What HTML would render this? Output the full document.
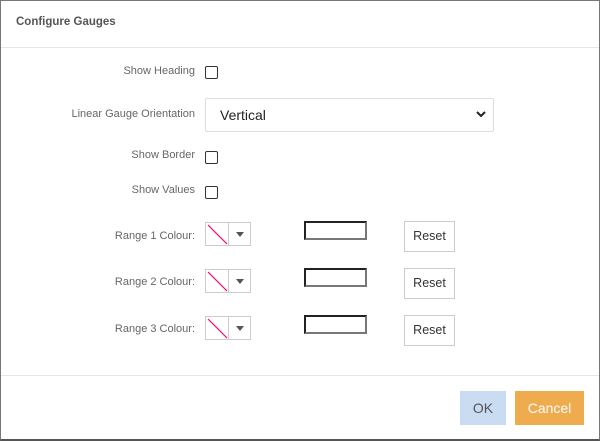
<!DOCTYPE html>
<html><head><style>
*{box-sizing:border-box;margin:0;padding:0}
body{width:600px;height:441px;background:#fff;font-family:"Liberation Sans",sans-serif;position:relative;overflow:hidden}
.frame{position:absolute;left:0;top:0;width:600px;height:441px;border:1px solid #777;border-bottom:2px solid #555}
.abs{position:absolute}
.title{left:16px;top:16px;font-size:11.5px;font-weight:bold;color:#555}
.hr{left:1px;width:598px;height:1px;background:#e6e6e6}
.lbl{right:405px;font-size:11px;color:#666;text-align:right;white-space:nowrap}
.cb{width:13px;height:13px;border:1px solid #333;border-radius:2px;left:205px}
.sel{left:205px;top:98px;width:289px;height:34px;border:1px solid #ddd;border-radius:2px;font-size:14px;color:#222;padding:8px 0 0 14px}
.cp{left:205px;width:46px;height:24px;border:1px solid #ccc;background:#fff}
.cp .sw{position:absolute;left:0;top:0;width:23px;height:22px;border-right:1px solid #ccc}
.box{left:304px;width:63px;height:19px;border:2px solid;border-color:#222 #777 #777 #222}
.rs{left:404px;width:51px;height:31px;border:1px solid #ccc;font-size:12.5px;color:#333;text-align:center;line-height:29px}
</style></head><body>
<div class="frame"></div>
<div class="abs title">Configure Gauges</div>
<div class="abs hr" style="top:47px"></div>
<div class="abs lbl" style="top:65px">Show Heading</div>
<div class="abs cb" style="top:66px"></div>
<div class="abs lbl" style="top:108px">Linear Gauge Orientation</div>
<div class="abs sel">Vertical<svg style="position:absolute;right:7px;top:12px" width="10" height="7" viewBox="0 0 10 7"><path d="M1 1l4 4 4-4" stroke="#222" stroke-width="2" fill="none"/></svg></div>
<div class="abs lbl" style="top:149px">Show Border</div>
<div class="abs cb" style="top:151px"></div>
<div class="abs lbl" style="top:184px">Show Values</div>
<div class="abs cb" style="top:186px"></div>

<div class="abs lbl" style="top:230px">Range 1 Colour:</div>
<div class="abs cp" style="top:222px"><div class="sw"><svg width="23" height="22"><line x1="2" y1="2" x2="21" y2="21" stroke="#f06" stroke-width="1.2"/></svg></div><svg style="position:absolute;left:30px;top:9px" width="8" height="5"><path d="M0 0h8L4 5z" fill="#555"/></svg></div>
<div class="abs box" style="top:221px"></div>
<div class="abs rs" style="top:221px">Reset</div>

<div class="abs lbl" style="top:276px">Range 2 Colour:</div>
<div class="abs cp" style="top:269px"><div class="sw"><svg width="23" height="22"><line x1="2" y1="2" x2="21" y2="21" stroke="#f06" stroke-width="1.2"/></svg></div><svg style="position:absolute;left:30px;top:9px" width="8" height="5"><path d="M0 0h8L4 5z" fill="#555"/></svg></div>
<div class="abs box" style="top:268px"></div>
<div class="abs rs" style="top:268px">Reset</div>

<div class="abs lbl" style="top:323px">Range 3 Colour:</div>
<div class="abs cp" style="top:316px"><div class="sw"><svg width="23" height="22"><line x1="2" y1="2" x2="21" y2="21" stroke="#f06" stroke-width="1.2"/></svg></div><svg style="position:absolute;left:30px;top:9px" width="8" height="5"><path d="M0 0h8L4 5z" fill="#555"/></svg></div>
<div class="abs box" style="top:315px"></div>
<div class="abs rs" style="top:315px">Reset</div>

<div class="abs hr" style="top:375px"></div>
<div class="abs" style="left:460px;top:391px;width:46px;height:34px;background:#c9dcf1;color:#555;font-size:14px;text-align:center;line-height:34px">OK</div>
<div class="abs" style="left:515px;top:391px;width:69px;height:34px;background:#eeac4f;color:#fff;font-size:14px;text-align:center;line-height:34px">Cancel</div>
</body></html>
